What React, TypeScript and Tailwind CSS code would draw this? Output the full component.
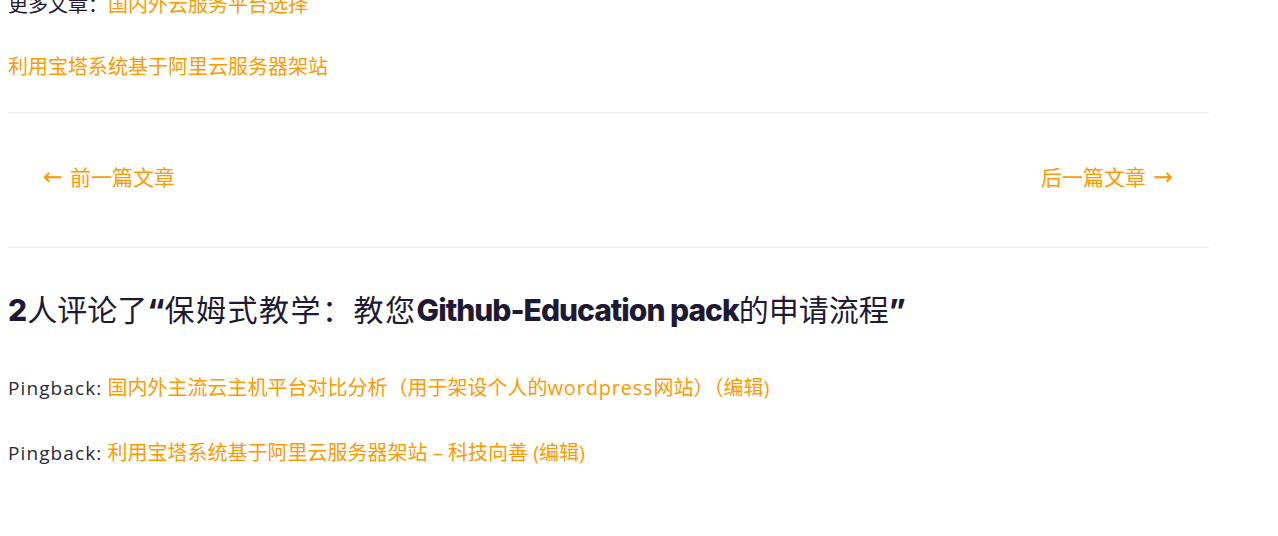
export default function App() {
  return (
    <div className="w-[1278px] h-[536px] overflow-hidden bg-white font-['Open_Sans','Noto_Sans_CJK_SC',sans-serif]">
      <div className="w-[1201px] ml-[8px]">
        <p className="-mt-[10px] text-[20px] leading-[30px] text-[#1e1a33]">
          更多文章：<a className="text-[#ff9900]">国内外云服务平台选择</a>
        </p>
        <p className="mt-[32px] text-[20px] leading-[30px]">
          <a className="text-[#ff9900]">利用宝塔系统基于阿里云服务器架站</a>
        </p>

        <div className="mt-[30px] border-t border-[#eeeeee]" />

        <nav className="flex justify-between pl-[35px] pr-[36px] pt-[49px] pb-[55px] text-[21px] leading-[30px] text-[#ff9900]">
          <a className="flex items-center gap-[7px]">
            <span className="font-['DejaVu_Sans'] text-[24px] leading-[30px]">←</span>
            <span>前一篇文章</span>
          </a>
          <a className="flex items-center gap-[7px]">
            <span>后一篇文章</span>
            <span className="font-['DejaVu_Sans'] text-[24px] leading-[30px]">→</span>
          </a>
        </nav>

        <div className="border-t border-[#eeeeee]" />

        <h2 className="mt-[42px] text-[30px] leading-[40px] text-[#1e1a33]">
          <b className="font-['Inter'] font-extrabold">2</b>
          人评论了<b className="font-['Inter'] font-extrabold">“</b>
          <span className="tracking-[1.5px]">保姆式教学：教您</span>
          <b className="font-['Inter'] font-extrabold tracking-[-1px]">Github-Education pack</b>
          的申请流程<b className="font-['Inter'] font-extrabold">”</b>
        </h2>

        <p className="mt-[43px] text-[20px] leading-[30px] text-[#282a3a]">
          <span className="text-[19px] tracking-[1.1px]">Pingback:</span>{" "}
          <a className="text-[#ff9900]">
            国内外主流云主机平台对比分析（用于架设个人的<span className="tracking-[0.8px]">wordpress</span>网站）（编辑)
          </a>
        </p>
        <p className="mt-[35px] text-[20px] leading-[30px] text-[#282a3a]">
          <span className="text-[19px] tracking-[1.1px]">Pingback:</span>{" "}
          <a className="text-[#ff9900]">利用宝塔系统基于阿里云服务器架站 – 科技向善</a>{" "}
          <a className="text-[#ff9900]">(编辑)</a>
        </p>
      </div>
    </div>
  );
}
